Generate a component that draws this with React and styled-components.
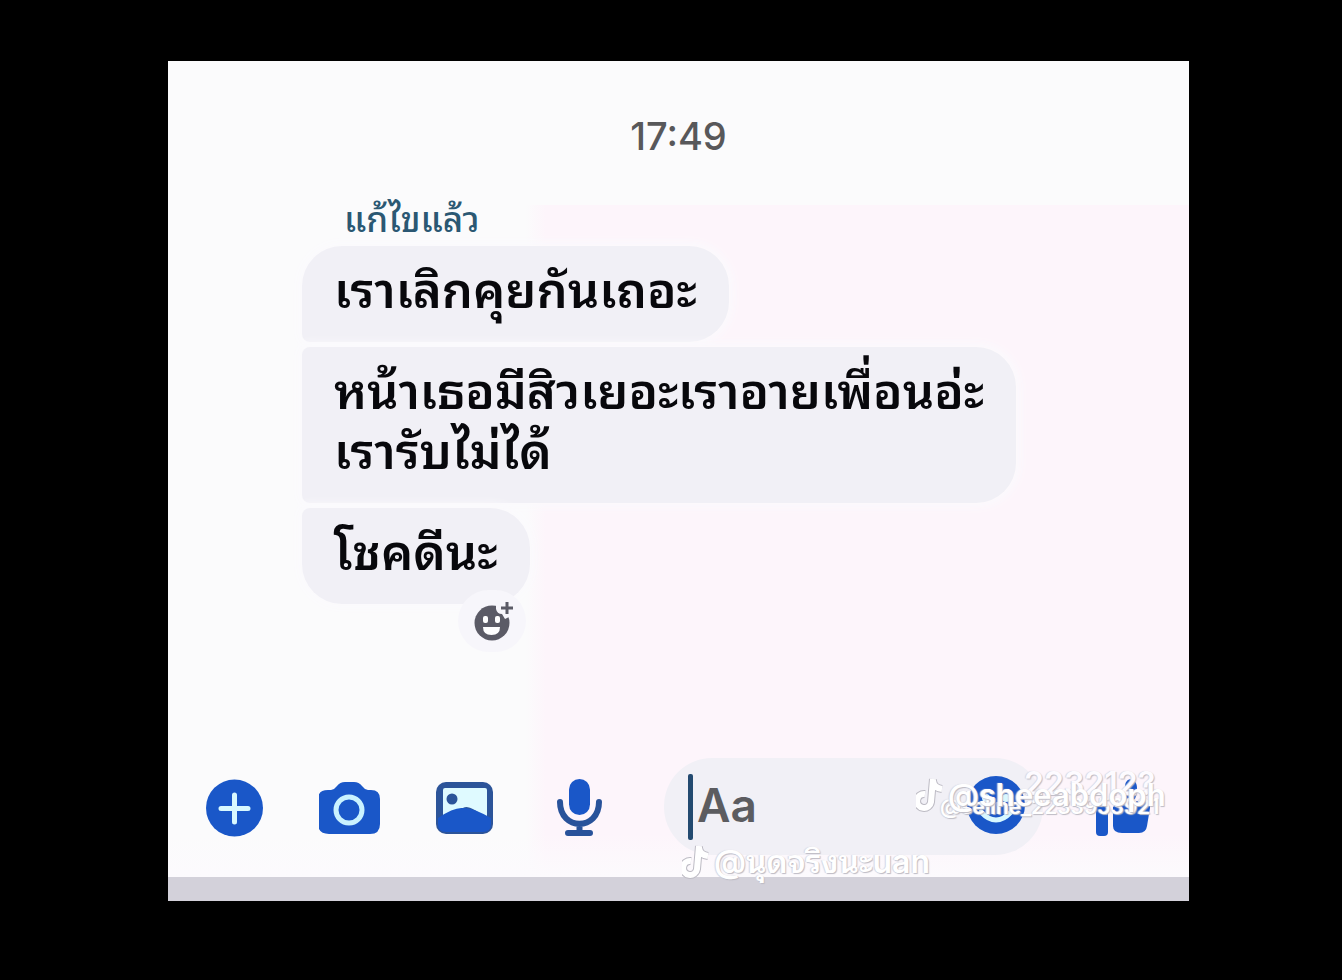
import styled, { createGlobalStyle, css } from "styled-components";

const GlobalStyle = createGlobalStyle`
   * {
      box-sizing: border-box;
   }
   body {
      margin: 0;
      background: #000000;
      font-family: Inter, "Noto Sans Thai Looped", "Noto Sans Thai", "Noto Sans", sans-serif;
   }
`;
const Page = styled.div`
   min-height: 100vh;
   padding: 61px 153px 79px 168px;
   display: flex;
`;
const Chat = styled.main`
   flex: 1;
   min-width: 0;
   display: flex;
   flex-direction: column;
   background:
      linear-gradient(transparent 92%, #fcfafd 97%),
      linear-gradient(90deg, transparent 35%, #fdf5fb 37%) 0 144px no-repeat,
      #fbfbfc;
`;
const Time = styled.time`
   margin-top: 53px;
   text-align: center;
   font-size: 38px;
   line-height: 44px;
   font-weight: 500;
   color: #58585a;
`;
const Messages = styled.section`
   flex: 1;
   display: flex;
   flex-direction: column;
   align-items: flex-start;
   padding: 34px 134px 0;
`;
const Edited = styled.span`
   padding: 0 42px;
   font-size: 35px;
   line-height: 54px;
   font-weight: 500;
   color: #2b5873;
`;
const Bubble = styled.p`
   position: relative;
   margin: 0 0 5px;
   padding: 15px 32px 21px;
   border-radius: ${(props) => props.$radius};
   background: #f1f0f6;
   box-shadow: 0 0 10px 4px #fbfafd;
   font-size: 49px;
   line-height: 60px;
   font-weight: 600;
   color: #08080c;
`;
const ReactButton = styled.button`
   position: absolute;
   right: 4px;
   bottom: -48px;
   width: 68px;
   height: 62px;
   padding: 0;
   border: 0;
   border-radius: 31px;
   background: #f7f6fb;
   color: #5b5b66;

   svg {
      display: block;
      margin: 0 auto 0 15px;
   }
`;
const Toolbar = styled.form`
   display: flex;
   align-items: center;
   column-gap: 53px;
   padding: 0 39px 22px 36px;
`;
const IconButton = styled.button`
   flex-shrink: 0;
   width: ${(props) => (props.$small ? "54px" : "62px")};
   height: 62px;
   padding: 0;
   border: 0;
   background: none;
   color: #1a57c8;

   svg {
      display: block;
      width: 100%;
      height: 100%;
   }
`;
const Field = styled.label`
   position: relative;
   flex: 1;
   min-width: 0;
   height: 97px;
   display: flex;
   align-items: center;
   padding: 0 16px 0 24px;
   border-radius: 48px;
   background: #f1f0f6;
`;
const Caret = styled.span`
   flex-shrink: 0;
   width: 5px;
   height: 66px;
   border-radius: 2px;
   background: #234a70;
`;
const Input = styled.input`
   flex: 1;
   min-width: 0;
   height: 60px;
   padding: 0 4px 4px;
   border: 0;
   outline: 0;
   background: none;
   font: 600 46px/56px Inter, sans-serif;
   color: #5c5c60;

   &::placeholder {
      color: #5c5c60;
      opacity: 1;
   }
`;
const HomeBar = styled.div`
   height: 24px;
   background: #d3d1da;
`;
const Watermark = styled.span`
   position: absolute;
   display: flex;
   align-items: center;
   column-gap: 4px;
   white-space: nowrap;
   font-size: 32px;
   line-height: 40px;
   font-weight: 600;
   color: #ffffff;
   text-shadow: 1px 1px 1px #bdbbc4, -1px 0 1px #d6d4dc;
   pointer-events: none;

   ${(props) =>
      props.$place === "top" &&
      css`
         left: 252px;
         top: 17px;
         font-size: 31px;
      `};
   ${(props) =>
      props.$place === "top-small" &&
      css`
         left: 276px;
         top: 29px;
         font-size: 21px;
      `};
   ${(props) =>
      props.$place === "top-number" &&
      css`
         left: 360px;
         top: 6px;
         font-size: 32px;
         color: #fdfbff;
      `};
   ${(props) =>
      props.$place === "bottom" &&
      css`
         left: 18px;
         top: 84px;
      `};
`;

const Note = () => (
   <svg width="28" height="38" viewBox="0 0 28 38" fill="none" aria-hidden="true">
      <path
         d="M17 3l-2 23a7 7 0 1 1-6-8M17 5q1 7 9 8"
         stroke="#bdbbc4"
         strokeWidth="8"
      />
      <path d="M17 3l-2 23a7 7 0 1 1-6-8M17 5q1 7 9 8" stroke="#fff" strokeWidth="6" />
   </svg>
);

const PlusIcon = () => (
   <svg viewBox="0 0 62 62" aria-hidden="true">
      <circle cx="30.500" cy="32" r="28.500" fill="currentColor" />
      <path
         d="M30.500 19v27M17 32.500h27"
         stroke="#d8f8ff"
         strokeWidth="5"
         strokeLinecap="round"
      />
   </svg>
);

const CameraIcon = () => (
   <svg viewBox="0 0 62 62" aria-hidden="true">
      <path
         d="M9 14h3q3 0 5-3l1-1q3-4 8-4h9q5 0 8 4l1 1q2 3 5 3h3q9 0 9 9v25q0 10-10 10H10Q-1 58-1 48V23q0-9 10-9z"
         fill="currentColor"
      />
      <circle cx="30" cy="34" r="13" fill="none" stroke="#c9f2ff" strokeWidth="5" />
   </svg>
);

const PhotoIcon = () => (
   <svg viewBox="0 0 62 62" aria-hidden="true">
      <rect x="2" y="6" width="57" height="52" rx="10" fill="#2c5499" />
      <path d="M11 12h40q2 0 2 2v29q-20-17-25-10-3-2-19 10V14q0-2 2-2z" fill="#dffaff" />
      <path d="M4 42q16-11 25-10 9-1 28 10v6q0 8-8 8H12q-8 0-8-8z" fill="currentColor" />
      <circle cx="18" cy="23" r="5.500" fill="#2c5499" />
   </svg>
);

const MicIcon = () => (
   <svg viewBox="0 0 62 62" fill="none" aria-hidden="true">
      <rect x="20" y="3" width="21" height="36" rx="10.500" fill="currentColor" />
      <path
         d="M11 26c0 29 39 29 39 0M30.500 48v8M19 57h22"
         stroke="#28529a"
         strokeWidth="6"
         strokeLinecap="round"
      />
   </svg>
);

const SmileIcon = () => (
   <svg viewBox="0 0 62 62" aria-hidden="true">
      <circle cx="31" cy="29" r="29" fill="currentColor" />
      <circle cx="21" cy="22" r="4" fill="#d8f8ff" />
      <circle cx="41" cy="22" r="4" fill="#d8f8ff" />
      <path
         d="M16 36q15 16 30 0"
         fill="none"
         stroke="#d8f8ff"
         strokeWidth="5"
         strokeLinecap="round"
      />
   </svg>
);

const LikeIcon = () => (
   <svg viewBox="0 0 54 62" fill="currentColor" aria-hidden="true">
      <rect x="0" y="29" width="12" height="31" rx="4" />
      <path d="M17 31c9-6 12-12 12-20 0-11 12-10 12 1 0 5-1 9-3 13h10q7 0 6 7l-3 18q-1 7-8 7H26q-9 0-9-7z" />
   </svg>
);

const AddReactionIcon = () => (
   <svg width="42" height="44" viewBox="0 0 42 44" aria-hidden="true">
      <circle cx="19" cy="24" r="17.500" fill="currentColor" />
      <path d="M23 3v7q1 5 6 5l3 5 8-4V3z" fill="#f7f6fb" />
      <path d="M34 3v12M28 9h12" stroke="currentColor" strokeWidth="3" />
      <rect x="10" y="17" width="5" height="7" rx="2" fill="#fff" />
      <rect x="22" y="17" width="5" height="7" rx="2" fill="#fff" />
      <path d="M10 28h17q0 8-8.500 8T10 28z" fill="#fff" />
   </svg>
);

const App = () => {
   return (
      <>
         <GlobalStyle />
         <Page lang="th">
            <Chat>
               <Time>17:49</Time>
               <Messages>
                  <Edited>แก้ไขแล้ว</Edited>
                  <Bubble $radius="40px 40px 40px 8px">เราเลิกคุยกันเถอะ</Bubble>
                  <Bubble $radius="8px 40px 40px 8px">
                     หน้าเธอมีสิวเยอะเราอายเพื่อนอ่ะ
                     <br />
                     เรารับไม่ได้
                  </Bubble>
                  <Bubble $radius="8px 40px 40px 40px">
                     โชคดีนะ
                     <ReactButton type="button" aria-label="React">
                        <AddReactionIcon />
                     </ReactButton>
                  </Bubble>
               </Messages>
               <Toolbar>
                  <IconButton type="button" aria-label="More">
                     <PlusIcon />
                  </IconButton>
                  <IconButton type="button" aria-label="Camera">
                     <CameraIcon />
                  </IconButton>
                  <IconButton type="button" aria-label="Photos">
                     <PhotoIcon />
                  </IconButton>
                  <IconButton type="button" aria-label="Voice">
                     <MicIcon />
                  </IconButton>
                  <Field>
                     <Caret />
                     <Input type="text" placeholder="Aa" aria-label="Message" />
                     <IconButton type="button" aria-label="Emoji">
                        <SmileIcon />
                     </IconButton>
                     <Watermark $place="top-number">223212?</Watermark>
                     <Watermark $place="top-small">@seline_2233953921</Watermark>
                     <Watermark $place="top">
                        <Note />
                        @sheeabdoph
                     </Watermark>
                     <Watermark $place="bottom">
                        <Note />
                        @นุดจริงนะuan
                     </Watermark>
                  </Field>
                  <IconButton type="button" aria-label="Like" $small>
                     <LikeIcon />
                  </IconButton>
               </Toolbar>
               <HomeBar />
            </Chat>
         </Page>
      </>
   );
};
export default App;
